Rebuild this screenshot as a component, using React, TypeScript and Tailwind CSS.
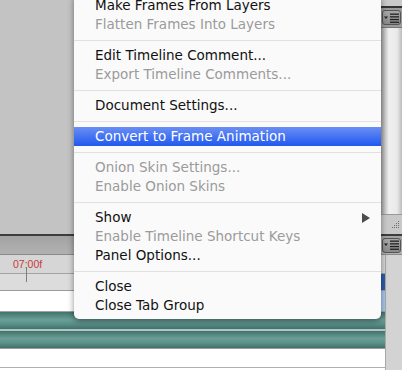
function PanelMenuIcon() {
  return (
    <div className="mx-auto flex h-[15px] w-[19px] items-center justify-center rounded-[3px] border border-[#555] bg-[linear-gradient(to_bottom,#a8a8a8,#8a8a8a)]">
      <svg width="15" height="10" viewBox="0 0 15 10">
        <path d="M0 3.5h4l-2 2.5z" fill="#222" />
        <rect x="6" y="0.5" width="9" height="1.3" fill="#222" />
        <rect x="6" y="3.2" width="9" height="1.3" fill="#222" />
        <rect x="6" y="5.9" width="9" height="1.3" fill="#222" />
        <rect x="6" y="8.6" width="9" height="1.3" fill="#222" />
      </svg>
    </div>
  );
}

function Grip() {
  const dots = [
    [7, 1],
    [5, 3], [7, 3],
    [3, 5], [5, 5], [7, 5],
    [1, 7], [3, 7], [5, 7], [7, 7],
  ];
  return (
    <svg width="9" height="9" viewBox="0 0 9 9">
      {dots.map(([x, y]) => (
        <rect key={`${x}-${y}`} x={x} y={y} width="1" height="1" fill="#6f6f6f" />
      ))}
    </svg>
  );
}

type Item = { label: string; disabled?: boolean; active?: boolean; submenu?: boolean } | "sep";

const items: Item[] = [
  { label: "Make Frames From Layers" },
  { label: "Flatten Frames Into Layers", disabled: true },
  "sep",
  { label: "Edit Timeline Comment..." },
  { label: "Export Timeline Comments...", disabled: true },
  "sep",
  { label: "Document Settings..." },
  "sep",
  { label: "Convert to Frame Animation", active: true },
  "sep",
  { label: "Onion Skin Settings...", disabled: true },
  { label: "Enable Onion Skins", disabled: true },
  "sep",
  { label: "Show", submenu: true },
  { label: "Enable Timeline Shortcut Keys", disabled: true },
  { label: "Panel Options..." },
  "sep",
  { label: "Close" },
  { label: "Close Tab Group" },
];

export default function App() {
  return (
    <div
      className="relative h-[370px] w-[402px] overflow-hidden bg-[#c3c3c3]"
      style={{ fontFamily: '"DejaVu Sans", "Liberation Sans", sans-serif' }}
    >
      {/* upper panel area */}
      <div className="flex h-[234px]">
        <div className="flex-1 bg-[#c3c3c3]" />
        <div className="flex w-[21px] flex-col">
          <div className="h-[6px] bg-[#c9c9c9]" />
          <div className="h-[2px] bg-[#333]" />
          <div className="flex h-[19px] items-center bg-[#9b9b9b]">
            <PanelMenuIcon />
          </div>
          <div className="h-px bg-[#777]" />
          <div className="flex-1 bg-[linear-gradient(to_right,#a4a4a4_0px,#c9c9c9_4px,#efefef_8px,#e9e9e9_16px,#bcbcbc_21px)]" />
          <div className="h-px bg-[#9a9a9a]" />
          <div className="flex h-[19px] items-center justify-end bg-[#c8c8c8] pr-[2px]">
            <Grip />
          </div>
        </div>
      </div>

      {/* timeline panel */}
      <div className="flex flex-col">
        <div className="h-[2px] bg-[#3d3d3d]" />
        <div className="flex h-[18px] items-center justify-end bg-[linear-gradient(to_bottom,#a3a3a3,#b1b1b1)] pr-[1px]">
          <div className="w-[20px]">
            <PanelMenuIcon />
          </div>
        </div>
        <div className="h-px bg-[#8a8a8a]" />
        <div className="flex">
          <div className="relative flex flex-1 flex-col">
            <div
              className="flex h-[18px] items-center bg-[#d6d6d6] pl-[13px] text-[10.5px] leading-none text-[#c63a3a]"
              style={{ fontFamily: '"Liberation Sans", sans-serif' }}
            >
              07:00f
            </div>
            <div className="h-px bg-[#a3a3a3]" />
            <div className="flex h-[16px] justify-end bg-[#dcdcdc]">
              <div className="w-[4px] bg-[#2a5fae]" />
            </div>
            <div className="h-px bg-[#9c9c9c]" />
            <div className="flex h-[20px] justify-end bg-white">
              <div className="w-[4px] bg-[#a9c8ee]" />
            </div>
            <div className="h-px bg-[#a2a2a2]" />
            <div className="h-[17px] bg-[linear-gradient(to_bottom,#40736c,#6a9f97_45%,#5b918a_70%,#3f716a)]" />
            <div className="h-[2px] bg-[#b9c4c2]" />
            <div className="h-[17px] bg-[linear-gradient(to_bottom,#40736c,#6a9f97_45%,#5b918a_70%,#3f716a)]" />
            <div className="h-px bg-[#9a9a9a]" />
            <div className="h-[18px] bg-white" />
            <div className="h-px bg-[#b0b0b0]" />
            <div className="h-[3px] bg-white" />
            <div className="absolute left-[26px] top-[12px] h-[15px] w-px bg-[#7d7d7d]" />
          </div>
          <div className="w-[17px] border-l border-[#a9a9a9] bg-[#d3d3d3]" />
        </div>
      </div>

      {/* panel flyout menu */}
      <div className="absolute left-[74px] top-[-4px] w-[307px] rounded-b-[5px] bg-[#fafafa] pb-[4px] text-[13.5px] leading-none shadow-[0_2px_6px_rgba(0,0,0,0.45)]">
        {items.map((item, i) =>
          item === "sep" ? (
            <div key={i} className="flex h-[12px] items-center">
              <div className="h-px w-full bg-[#e1e1e1]" />
            </div>
          ) : (
            <div
              key={i}
              className={`flex h-[19px] items-center justify-between pl-[21px] pr-[11px] ${
                item.active
                  ? "bg-[linear-gradient(to_bottom,#6a8ff3,#2058f0)] text-white"
                  : item.disabled
                  ? "text-[#9b9b9b]"
                  : "text-[#111]"
              }`}
            >
              <span>{item.label}</span>
              {item.submenu && (
                <svg width="8" height="10" viewBox="0 0 8 10">
                  <path d="M0 0L8 5L0 10z" fill="#4c4c4c" />
                </svg>
              )}
            </div>
          )
        )}
      </div>
    </div>
  );
}
